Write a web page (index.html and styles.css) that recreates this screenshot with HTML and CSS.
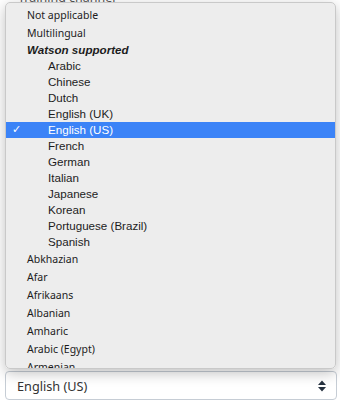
FILE: index.html
```html
<!DOCTYPE html>
<html lang="en">
<head>
    <meta charset="UTF-8">
    <meta name="viewport" content="width=device-width, initial-scale=1.0">
    <title>Language</title>
    <link rel="stylesheet" href="styles.css">
</head>
<body>
    <div class="page">
        <label class="label">Training channel</label>

        <div class="select">
            <span class="value">English (US)</span>
            <svg class="arrows" width="10" height="14" viewBox="0 0 10 14">
                <path d="M5 1.5 L9 6 H1 Z" fill="#25313f"/>
                <path d="M5 12.5 L9 8 H1 Z" fill="#25313f"/>
            </svg>
        </div>
    </div>

    <div class="menu">
        <div class="opt">Not applicable</div>
        <div class="opt">Multilingual</div>
        <div class="group">Watson supported</div>
        <div class="sub">Arabic</div>
        <div class="sub">Chinese</div>
        <div class="sub">Dutch</div>
        <div class="sub">English (UK)</div>
        <div class="sub selected"><span class="check">✓</span>English (US)</div>
        <div class="sub">French</div>
        <div class="sub">German</div>
        <div class="sub">Italian</div>
        <div class="sub">Japanese</div>
        <div class="sub">Korean</div>
        <div class="sub">Portuguese (Brazil)</div>
        <div class="sub">Spanish</div>
        <div class="opt">Abkhazian</div>
        <div class="opt">Afar</div>
        <div class="opt">Afrikaans</div>
        <div class="opt">Albanian</div>
        <div class="opt">Amharic</div>
        <div class="opt">Arabic (Egypt)</div>
        <div class="opt">Armenian</div>
    </div>
</body>
</html>
```

FILE: styles.css
```css
* {
    margin: 0;
    padding: 0;
    box-sizing: border-box;
}

body {
    background: #fff;
    font-family: "Noto Sans", sans-serif;
    color: #222;
}

.page {
    height: 408px;
    padding: 0 3px 8px 5px;
    display: flex;
    flex-direction: column;
    justify-content: space-between;
    overflow: hidden;
}

.label {
    display: block;
    margin-top: -9px;
    margin-left: 13px;
    font-size: 12.5px;
    line-height: 14px;
    color: #555;
}

.select {
    height: 29px;
    border: 1px solid #c6cdd5;
    border-radius: 4px;
    display: flex;
    align-items: center;
    justify-content: space-between;
    padding: 0 9px 0 11px;
    font-size: 12.7px;
    color: #333;
}

.menu {
    position: absolute;
    left: 5px;
    top: 2px;
    width: 331px;
    height: 367px;
    overflow: hidden;
    padding-top: 3px;
    background: rgba(236, 236, 236, 0.97);
    border: 1px solid #c9c9c9;
    border-radius: 5px;
    box-shadow: 0 4px 14px rgba(0, 0, 0, 0.25);
    color: #1c1c1c;
}

.opt {
    height: 18px;
    line-height: 18px;
    padding-left: 21px;
    font-size: 10.5px;
}

.group,
.sub {
    height: 16px;
    line-height: 16px;
    font-family: "Liberation Sans", Arial, sans-serif;
    font-size: 11.6px;
}

.group {
    padding-left: 21px;
    font-weight: bold;
    font-style: italic;
}

.sub {
    padding-left: 42px;
    position: relative;
}

.selected {
    background: #3b83f7;
    color: #fff;
}

.check {
    position: absolute;
    left: 6px;
    top: 0;
    font-family: "DejaVu Sans", sans-serif;
    font-size: 11px;
}
```
